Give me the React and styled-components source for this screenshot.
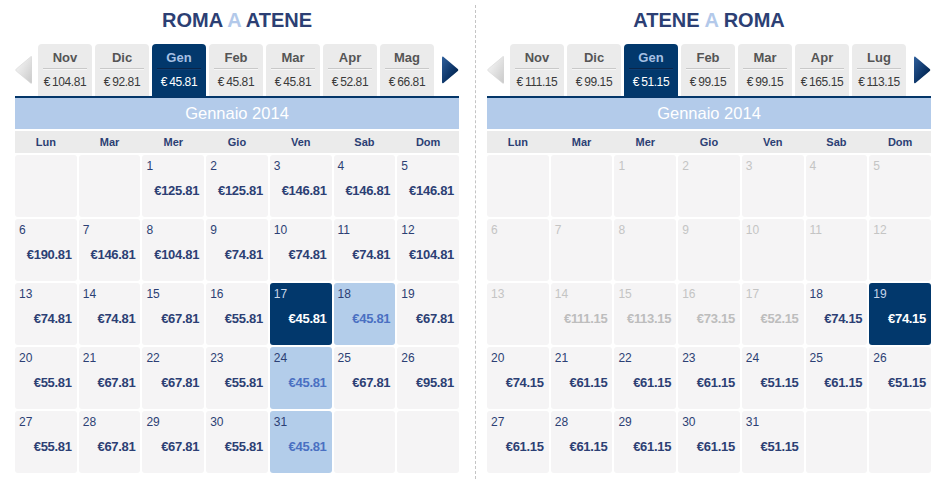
import React from "react";
import styled, { createGlobalStyle } from "styled-components";

const Global = createGlobalStyle`
  html, body { margin: 0; padding: 0; background: #fff; }
  body { font-family: "Liberation Sans", Arial, sans-serif; }
`;

const Page = styled.div`
  display: flex;
  width: 951px;
  height: 479px;
  padding-left: 15px;
  box-sizing: border-box;
  overflow: hidden;
`;

const Panel = styled.section`
  width: 444px;
  display: flex;
  flex-direction: column;
`;

const Divider = styled.div`
  width: 0;
  margin: 5px 11px 0 16px;
  border-left: 1px dashed #c4c4c4;
`;

const Title = styled.h1`
  margin: 0;
  height: 44px;
  box-sizing: border-box;
  padding-top: 10px;
  font-size: 20px;
  line-height: 20px;
  font-weight: bold;
  text-align: center;
  color: #2c3f74;
  font-family: "Liberation Sans", Arial, sans-serif;
`;

const Light = styled.span`
  color: #b3c9ea;
`;

const TabsRow = styled.div`
  display: flex;
  align-items: center;
  height: 52px;
  border-bottom: 2px solid #043669;
`;

const ArrowBox = styled.button`
  border: 0;
  padding: 0;
  background: none;
  width: 17px;
  height: 30px;
  margin: ${(p) => (p.$right ? "0 0 0 8px" : "0 6px 0 0")};
  display: flex;
  cursor: pointer;
`;

const Tabs = styled.div`
  display: flex;
  gap: 3px;
  align-self: flex-end;
  height: 52px;
`;

const Tab = styled.div`
  width: 54px;
  height: 52px;
  box-sizing: border-box;
  border-radius: 4px 4px 0 0;
  background: ${(p) => (p.$active ? "#02386c" : "#ebebeb")};
  display: flex;
  flex-direction: column;
  align-items: center;
  padding: 7px 5px 0;
`;

const TabMonth = styled.div`
  font-size: 13px;
  line-height: 14px;
  font-weight: bold;
  color: ${(p) => (p.$active ? "#a6c0e4" : "#555555")};
  height: 14px;
`;

const TabRule = styled.div`
  align-self: stretch;
  height: 1px;
  margin-top: 3px;
  background: ${(p) => (p.$active ? "#0a2548" : "#c9c9c9")};
  box-shadow: 0 1px 0 ${(p) => (p.$active ? "#0b3d73" : "#f6f6f6")};
`;

const TabPrice = styled.div`
  margin-top: 6px;
  font-size: 12px;
  line-height: 14px;
  white-space: nowrap;
  color: ${(p) => (p.$active ? "#ffffff" : "#3a3a3a")};
  letter-spacing: -0.4px;
`;

const MonthBar = styled.div`
  height: 31px;
  background: #b3cbea;
  color: #fff;
  font-size: 16.5px;
  line-height: 31px;
  text-align: center;
`;

const WeekRow = styled.div`
  margin-top: 2px;
  height: 22px;
  background: #ebebeb;
  display: grid;
  grid-template-columns: repeat(7, 1fr);
  gap: 2px;
`;

const WeekDay = styled.div`
  font-size: 11px;
  line-height: 22px;
  font-weight: bold;
  color: #2c3f74;
  text-align: center;
`;

const Grid = styled.div`
  margin-top: 2px;
  display: grid;
  grid-template-columns: repeat(7, 1fr);
  grid-auto-rows: 62px;
  gap: 2px;
`;

const cellBg = { sel: "#02386c", range: "#b3cdea", none: "#f5f4f5" };
const priceColor = { sel: "#ffffff", range: "#4a70c2", none: "#2c3f74", off: "#bdbdbd" };

const Cell = styled.div`
  border-radius: 3px;
  background: ${(p) => cellBg[p.$state] || cellBg.none};
  display: flex;
  flex-direction: column;
  padding: 4px 5px 0 4px;
  box-sizing: border-box;
`;

const DayNum = styled.div`
  font-size: 12px;
  line-height: 14px;
  color: ${(p) => (p.$state === "sel" ? "#c8d6ea" : p.$state === "off" ? "#c4c4c4" : "#2c3f74")};
`;

const Price = styled.div`
  margin-top: 10px;
  text-align: right;
  font-size: 13px;
  line-height: 16px;
  font-weight: bold;
  letter-spacing: -0.3px;
  color: ${(p) => priceColor[p.$state] || priceColor.none};
`;

const LeftArrow = () => (
  <svg width="17" height="30" viewBox="0 0 17 30">
    <defs>
      <linearGradient id="lg" x1="0" y1="0" x2="1" y2="1">
        <stop offset="0" stopColor="#fbfbfb" />
        <stop offset="1" stopColor="#c9c9c9" />
      </linearGradient>
    </defs>
    <path d="M16 1.5 Q17 1 17 3 L17 27 Q17 29 15.5 28 L1.2 16 Q0 15 1.2 14 Z" fill="url(#lg)" stroke="#d6d6d6" strokeWidth="0.6" />
  </svg>
);

const RightArrow = () => (
  <svg width="17" height="30" viewBox="0 0 17 30">
    <defs>
      <linearGradient id="rg" x1="0" y1="0" x2="1" y2="1">
        <stop offset="0" stopColor="#2f5f9c" />
        <stop offset="0.6" stopColor="#0b3365" />
        <stop offset="1" stopColor="#001a3a" />
      </linearGradient>
    </defs>
    <path d="M1 1.5 Q0 1 0 3 L0 27 Q0 29 1.5 28 L15.8 16 Q17 15 15.8 14 Z" fill="url(#rg)" />
  </svg>
);

const WEEK = ["Lun", "Mar", "Mer", "Gio", "Ven", "Sab", "Dom"];

const left = {
  title: ["ROMA", "ATENE"],
  tabs: [
    ["Nov", "104.81"], ["Dic", "92.81"], ["Gen", "45.81", true], ["Feb", "45.81"],
    ["Mar", "45.81"], ["Apr", "52.81"], ["Mag", "66.81"],
  ],
  days: {
    1: "125.81", 2: "125.81", 3: "146.81", 4: "146.81", 5: "146.81",
    6: "190.81", 7: "146.81", 8: "104.81", 9: "74.81", 10: "74.81", 11: "74.81", 12: "104.81",
    13: "74.81", 14: "74.81", 15: "67.81", 16: "55.81", 17: "45.81", 18: "45.81", 19: "67.81",
    20: "55.81", 21: "67.81", 22: "67.81", 23: "55.81", 24: "45.81", 25: "67.81", 26: "95.81",
    27: "55.81", 28: "67.81", 29: "67.81", 30: "55.81", 31: "45.81",
  },
  state: { 17: "sel", 18: "range", 24: "range", 31: "range" },
};

const right = {
  title: ["ATENE", "ROMA"],
  tabs: [
    ["Nov", "111.15"], ["Dic", "99.15"], ["Gen", "51.15", true], ["Feb", "99.15"],
    ["Mar", "99.15"], ["Apr", "165.15"], ["Lug", "113.15"],
  ],
  days: {
    14: "111.15", 15: "113.15", 16: "73.15", 17: "52.15", 18: "74.15", 19: "74.15",
    20: "74.15", 21: "61.15", 22: "61.15", 23: "61.15", 24: "51.15", 25: "61.15", 26: "51.15",
    27: "61.15", 28: "61.15", 29: "61.15", 30: "61.15", 31: "51.15",
  },
  state: (() => {
    const s = { 19: "sel" };
    for (let d = 1; d <= 17; d++) s[d] = "off";
    return s;
  })(),
};

function Calendar({ data }) {
  const cells = [];
  for (let i = 0; i < 2; i++) cells.push(<Cell key={"e" + i} />);
  for (let d = 1; d <= 31; d++) {
    const st = data.state[d] || "none";
    const p = data.days[d];
    cells.push(
      <Cell key={d} $state={st}>
        <DayNum $state={st}>{d}</DayNum>
        {p && <Price $state={st}>€{p}</Price>}
      </Cell>
    );
  }
  for (let i = 0; i < 2; i++) cells.push(<Cell key={"t" + i} />);
  return (
    <Panel>
      <Title>
        {data.title[0]} <Light>A</Light> {data.title[1]}
      </Title>
      <TabsRow>
        <ArrowBox aria-label="prev">
          <LeftArrow />
        </ArrowBox>
        <Tabs>
          {data.tabs.map(([m, p, a]) => (
            <Tab key={m} $active={a}>
              <TabMonth $active={a}>{m}</TabMonth>
              <TabRule $active={a} />
              <TabPrice $active={a}>€{"\u2009"}{p}</TabPrice>
            </Tab>
          ))}
        </Tabs>
        <ArrowBox $right aria-label="next">
          <RightArrow />
        </ArrowBox>
      </TabsRow>
      <MonthBar>Gennaio 2014</MonthBar>
      <WeekRow>
        {WEEK.map((w) => (
          <WeekDay key={w}>{w}</WeekDay>
        ))}
      </WeekRow>
      <Grid>{cells}</Grid>
    </Panel>
  );
}

export default function App() {
  return (
    <>
      <Global />
      <Page>
        <Calendar data={left} />
        <Divider />
        <Calendar data={right} />
      </Page>
    </>
  );
}
